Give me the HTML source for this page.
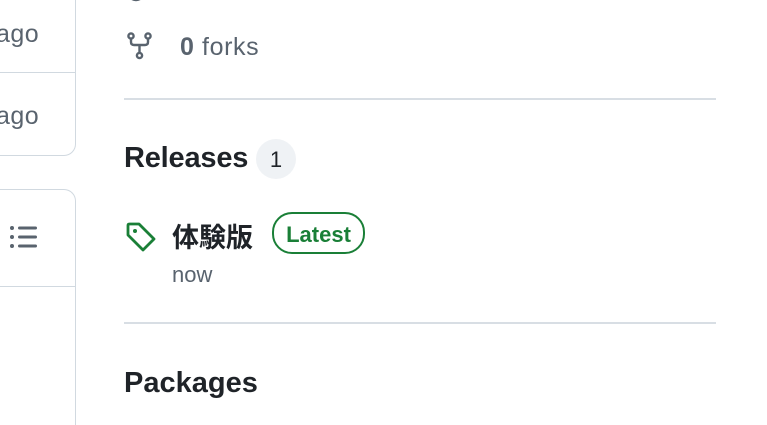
<!DOCTYPE html><html><head><style>
html,body{margin:0;width:767px;height:425px;overflow:hidden}
body{background:#fff;position:relative;font-family:"Liberation Sans","Noto Sans CJK JP",sans-serif}
.a{position:absolute}
.g{color:#59636e}
</style></head><body>
<div class="a" style="left:-20px;top:-20px;width:94px;height:174px;border:1px solid #d1d9e0;border-radius:12px"></div>
<div class="a" style="left:0;top:72px;width:75px;height:1px;background:#d1d9e0"></div>
<div class="a g" style="left:-4px;top:20px;font-size:25px;letter-spacing:0.5px">ago</div>
<div class="a g" style="left:-4px;top:102px;font-size:25px;letter-spacing:0.5px">ago</div>
<div class="a" style="left:-20px;top:189px;width:94px;height:236px;border:1px solid #d1d9e0;border-bottom:none;border-radius:12px 12px 0 0"></div>
<div class="a" style="left:0;top:286px;width:75px;height:1px;background:#d1d9e0"></div>
<svg class="a" style="left:9px;top:225px" width="30" height="26" viewBox="0 0 30 26"><g fill="#59636e"><circle cx="3" cy="3" r="2"/><circle cx="3" cy="12" r="2"/><circle cx="3" cy="21" r="2"/><rect x="9" y="1.5" width="19" height="3" rx="1.5"/><rect x="9" y="10.5" width="19" height="3" rx="1.5"/><rect x="9" y="19.5" width="19" height="3" rx="1.5"/></g></svg>
<svg class="a" style="left:126px;top:-8px" width="20" height="12"><circle cx="10" cy="0" r="8" fill="none" stroke="#59636e" stroke-width="2.4"/></svg>
<svg class="a" style="left:127px;top:32px" width="26" height="28" viewBox="0 0 26 28"><g fill="none" stroke="#59636e" stroke-width="2.4"><circle cx="4" cy="4" r="2.6"/><circle cx="21" cy="4" r="2.6"/><circle cx="12.5" cy="23.5" r="2.6"/><path d="M4 7v3q0 3 3 3h11q3 0 3-3V7M12.5 13v8"/></g></svg>
<div class="a" style="left:180px;top:33px;font-size:25px;color:#59636e;letter-spacing:0.6px"><b>0</b> forks</div>
<div class="a" style="left:124px;top:98px;width:592px;height:2px;background:#d8dee4"></div>
<div class="a" style="left:124px;top:142px;font-size:29px;font-weight:bold;color:#1f2328;letter-spacing:-0.2px">Releases</div>
<div class="a" style="left:256px;top:139px;width:40px;height:40px;border-radius:20px;background:#eff2f5;color:#1f2328;font-size:22px;text-align:center;line-height:42px">1</div>
<svg class="a" style="left:125px;top:221px" width="32" height="32" viewBox="0 0 32 32"><path d="M3 4.5Q3 3 4.5 3H14l15 15-11 11L3 14z" fill="none" stroke="#1a7f37" stroke-width="2.8" stroke-linejoin="round"/><circle cx="10" cy="10" r="2" fill="#1a7f37"/></svg>
<div class="a" style="left:172px;top:216px;font-size:27px;font-weight:bold;color:#1f2328">体験版</div>
<div class="a" style="left:272px;top:212px;width:89px;height:38px;border:2px solid #1a7f37;border-radius:20px;color:#1a7f37;font-size:22px;font-weight:bold;text-align:center;line-height:42px">Latest</div>
<div class="a g" style="left:172px;top:262px;font-size:22px">now</div>
<div class="a" style="left:124px;top:322px;width:592px;height:2px;background:#d8dee4"></div>
<div class="a" style="left:124px;top:367px;font-size:29px;font-weight:bold;color:#1f2328">Packages</div>
</body></html>
